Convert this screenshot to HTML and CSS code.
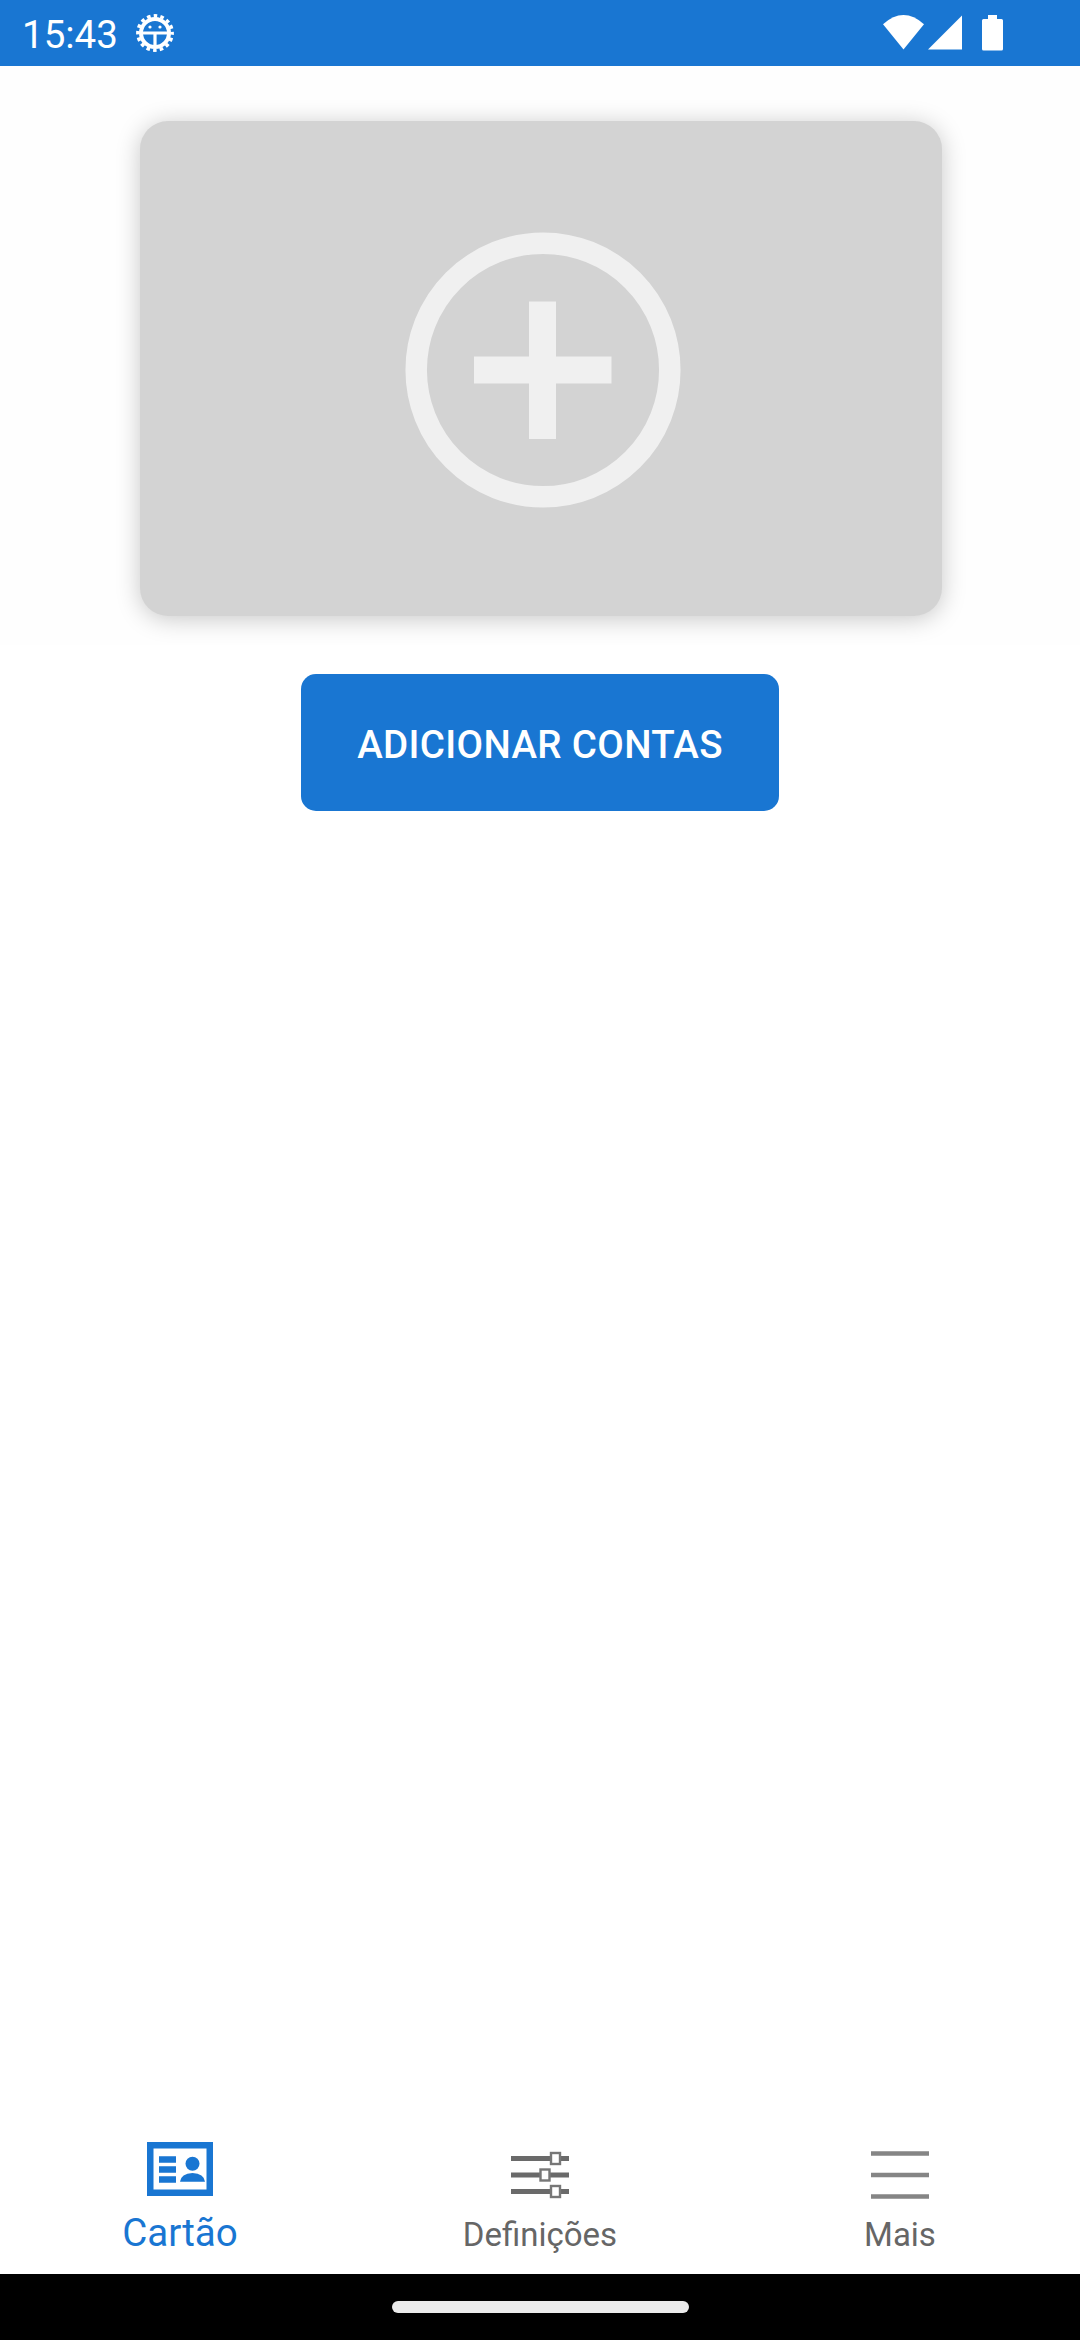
FILE: index.html
```html
<!DOCTYPE html>
<html lang="pt">

<head>
    <meta charset="UTF-8">
    <meta name="viewport" content="width=device-width, initial-scale=1.0">
    <title>Cartão</title>
    <link rel="stylesheet" href="styles.css">
</head>

<body>
    <div class="status-bar">
        <span class="clock">15:43</span>
        <svg class="gear" width="38" height="38" viewBox="-19 -19 38 38">
            <circle r="14" fill="none" stroke="#fff" stroke-width="4"/>
            <circle r="17.2" fill="none" stroke="#fff" stroke-width="3.4" stroke-dasharray="3.6 3.15" stroke-dashoffset="1.8"/>
            <path d="M-14 0H14M0 0V14" fill="none" stroke="#fff" stroke-width="3.2"/>
            <circle cx="-5" cy="-6" r="1.6" fill="#fff"/>
            <circle cx="5" cy="-6" r="1.6" fill="#fff"/>
        </svg>
        <div class="status-icons">
            <svg width="41" height="36" viewBox="0 0 41 36">
                <path d="M0 9.2Q20.5 -9.2 41 9.2L20.5 34.5Z" fill="#fff"/>
            </svg>
            <svg class="signal" width="34" height="36" viewBox="0 0 34 36">
                <path d="M34 .5V34.500H0Z" fill="#fff"/>
            </svg>
            <svg class="battery" width="21" height="36" viewBox="0 0 21 36">
                <path d="M6 0H15V4H19.5Q21 4 21 5.5V34Q21 35.5 19.5 35.5H1.5Q0 35.5 0 34V5.5Q0 4 1.5 4H6Z" fill="#fff"/>
            </svg>
        </div>
    </div>

    <main>
        <div class="card-area">
            <div class="card">
                <svg width="276" height="276" viewBox="0 0 276 276">
                    <circle cx="138" cy="138" r="126.8" fill="none" stroke="#f0f0f0" stroke-width="21.5"/>
                    <path d="M69 138H206.5M137.5 69.5V207" fill="none" stroke="#f0f0f0" stroke-width="27"/>
                </svg>
            </div>
        </div>
        <button class="add-button">ADICIONAR CONTAS</button>
    </main>

    <nav>
        <a class="nav-item active">
            <svg width="66" height="54" viewBox="0 0 66 54">
                <rect x="3.25" y="3.25" width="59.5" height="47.5" fill="none" stroke="#1976d2" stroke-width="6.5"/>
                <path d="M12 17.5H29M12 27.5H29M12 37.5H29" stroke="#1976d2" stroke-width="6.5"/>
                <circle cx="45.5" cy="21.7" r="7" fill="#1976d2"/>
                <path d="M33 39.8Q34 31.5 45.5 31Q57 31.5 58 39.8Z" fill="#1976d2"/>
            </svg>
            <span>Cartão</span>
        </a>
        <a class="nav-item">
            <svg width="58" height="49" viewBox="0 0 58 49">
                <path d="M0 7.5H58M0 24H58M0 40.5H58" stroke="#6a6a6a" stroke-width="5"/>
                <g fill="#fff" stroke="#777" stroke-width="2.4">
                    <rect x="40" y="2" width="9" height="11"/>
                    <rect x="29.5" y="18.5" width="9" height="11"/>
                    <rect x="40" y="35" width="9" height="11"/>
                </g>
            </svg>
            <span>Definições</span>
        </a>
        <a class="nav-item">
            <svg width="58" height="49" viewBox="0 0 58 49">
                <path d="M0 2.5H58M0 24H58M0 45.5H58" stroke="#858585" stroke-width="4.5"/>
            </svg>
            <span>Mais</span>
        </a>
    </nav>

    <div class="gesture-bar">
        <div class="handle"></div>
    </div>
</body>

</html>
```
FILE: styles.css
```css
body {
    margin: 0;
    height: 100vh;
    display: flex;
    flex-direction: column;
    background: #fff;
    font-family: Roboto, sans-serif;
}

svg {
    display: block;
}

.status-bar {
    height: 66px;
    flex-shrink: 0;
    box-sizing: border-box;
    display: flex;
    align-items: center;
    padding: 0 77px 0 22px;
    background: #1976d2;
    color: #fff;
}

.clock {
    padding-top: 3px;
    font-size: 38.5px;
    line-height: 44px;
}

.gear {
    margin-left: 18px;
}

.status-icons {
    display: flex;
    margin-left: auto;
}

.signal {
    margin-left: 4px;
}

.battery {
    margin-left: 20px;
}

main {
    flex: 1;
    display: flex;
    flex-direction: column;
    align-items: center;
}

.card-area {
    width: 100%;
    height: 579px;
    box-sizing: border-box;
    padding: 55px 138px 29px 140px;
    background: #fefefe;
}

.card {
    height: 495px;
    box-sizing: border-box;
    display: flex;
    align-items: center;
    justify-content: center;
    padding: 2px 0 0 3px;
    background: #d3d3d3;
    border-radius: 28px;
    box-shadow: 0 3px 24px rgba(0, 0, 0, 0.22);
}

.add-button {
    width: 478px;
    height: 137px;
    margin-top: 29px;
    padding: 3px 0 0;
    border: none;
    border-radius: 15px;
    background: #1976d2;
    color: #fff;
    font-family: inherit;
    font-size: 38.5px;
    font-weight: 500;
    letter-spacing: 0.35px;
}

nav {
    height: 165px;
    display: flex;
}

.nav-item {
    flex: 1;
    display: flex;
    flex-direction: column;
    align-items: center;
    justify-content: flex-end;
    gap: 15px;
    padding-bottom: 19px;
    color: #666;
    font-size: 33px;
    line-height: 40px;
}

.nav-item.active {
    color: #1976d2;
    font-size: 38.5px;
    line-height: 44px;
}

.gesture-bar {
    height: 66px;
    flex-shrink: 0;
    display: flex;
    align-items: center;
    justify-content: center;
    background: #000;
}

.handle {
    width: 297px;
    height: 12px;
    border-radius: 6px;
    background: #ebebeb;
}
```
